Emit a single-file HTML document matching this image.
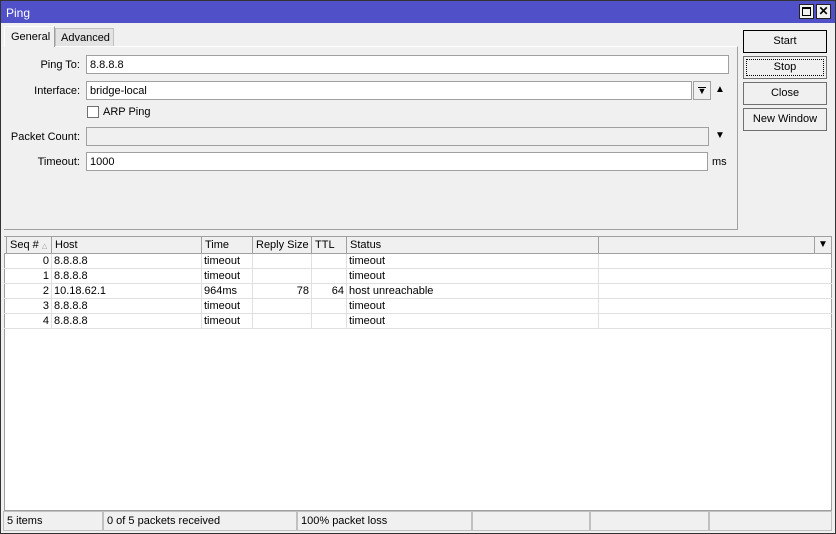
<!DOCTYPE html>
<html><head><style>
*{margin:0;padding:0;box-sizing:border-box}
body{width:836px;height:534px;background:#f0f0f0;font-family:"Liberation Sans",sans-serif;font-size:11px;color:#000;position:relative;overflow:hidden}
.a{position:absolute;white-space:nowrap}
.win{left:0;top:0;width:836px;height:534px;border:1px solid #333}
.title{left:1px;top:1px;width:834px;height:22px;background:#5050c8;color:#fff;font-size:12px;padding:5px 0 0 5px}
.tb{width:15px;height:15px;background:#f0f0f0;border:1px solid #222;top:4px}
.inp{background:#fff;border:1px solid #a0a0a0;height:19px;padding:2px 3px;line-height:14px}
.lbl{text-align:right;width:80px;left:0}
.btn{left:743px;width:84px;height:23px;border:1px solid #707070;background:#f0f0f0;text-align:center;line-height:21px}
.hd{top:236px;height:18px;border-right:1px solid #a0a0a0;border-top:1px solid #a0a0a0;border-bottom:1px solid #a0a0a0;padding:2px 3px;background:#f0f0f0;overflow:hidden}
.row{left:4px;width:828px;height:15px;border-bottom:1px solid #e0e0e0}
.c{position:absolute;top:0;height:15px;line-height:14px;border-right:1px solid #e0e0e0;padding:0 2px;white-space:nowrap;overflow:hidden}
.sb{top:511px;height:20px;border:1px solid #c0c0c0;padding:3px 3px;white-space:nowrap}
</style></head><body>
<div class="a win"></div>
<div class="a title">Ping</div>
<div class="a tb" style="left:799px"><div class="a" style="left:2px;top:2px;width:9px;height:9px;border:1px solid #000;border-top-width:2px"></div></div>
<div class="a tb" style="left:816px;font-weight:bold;font-size:12px;line-height:13px;text-align:center">✕</div>

<div class="a" style="left:4px;top:46px;width:734px;height:184px;border:1px solid #a0a0a0;border-left:none;border-top-color:#fff"></div>
<div class="a" style="left:4px;top:26px;width:51px;height:21px;background:#f0f0f0;border:1px solid #fff;border-right-color:#a0a0a0;border-bottom:none;padding:4px 0 0 6px">General</div>
<div class="a" style="left:55px;top:28px;width:59px;height:18px;background:#e3e3e3;border:1px solid #c0c0c0;border-bottom:none;padding:3px 0 0 5px">Advanced</div>

<div class="a lbl" style="top:59px">Ping To:</div>
<div class="a inp" style="left:86px;top:55px;width:643px">8.8.8.8</div>
<div class="a lbl" style="top:85px">Interface:</div>
<div class="a inp" style="left:86px;top:81px;width:606px">bridge-local</div>
<div class="a" style="left:693px;top:81px;width:18px;height:19px;border:1px solid #a0a0a0;text-align:center;font-size:9px;line-height:19px">▼</div>
<div class="a" style="left:698px;top:87px;width:8px;height:1px;background:#000"></div>
<div class="a" style="left:715px;top:84px;font-size:10px">▲</div>
<div class="a" style="left:87px;top:106px;width:12px;height:12px;background:#fff;border:1px solid #707070"></div>
<div class="a" style="left:103px;top:106px">ARP Ping</div>
<div class="a lbl" style="top:131px">Packet Count:</div>
<div class="a inp" style="left:86px;top:127px;width:623px;background:#f0f0f0"></div>
<div class="a" style="left:715px;top:130px;font-size:10px">▼</div>
<div class="a lbl" style="top:156px">Timeout:</div>
<div class="a inp" style="left:86px;top:152px;width:622px">1000</div>
<div class="a" style="left:712px;top:156px;font-size:11px">ms</div>

<div class="a btn" style="top:30px;border-color:#000">Start</div>
<div class="a btn" style="top:56px"><div style="position:absolute;left:2px;top:2px;right:2px;bottom:2px;border:1px dotted #000"></div>Stop</div>
<div class="a btn" style="top:82px">Close</div>
<div class="a btn" style="top:108px">New Window</div>

<div class="a" style="left:4px;top:236px;width:828px;height:275px;background:#fff;border:1px solid #a0a0a0"></div>
<div class="a hd" style="left:4px;width:3px;padding:0"></div>
<div class="a hd" style="left:7px;width:45px">Seq # <span style="font-size:7px;color:#999">△</span></div>
<div class="a hd" style="left:52px;width:150px">Host</div>
<div class="a hd" style="left:202px;width:51px">Time</div>
<div class="a hd" style="left:253px;width:59px">Reply Size</div>
<div class="a hd" style="left:312px;width:35px">TTL</div>
<div class="a hd" style="left:347px;width:252px">Status</div>
<div class="a hd" style="left:599px;width:216px"></div>
<div class="a hd" style="left:815px;width:17px;font-size:10px;padding:2px 3px">▼</div>

<div class="a" style="left:4px;top:254px">
<div class="row a" style="left:0;top:0"><div class="c" style="left:0;width:48px;text-align:right">0</div><div class="c" style="left:48px;width:150px">8.8.8.8</div><div class="c" style="left:198px;width:51px">timeout</div><div class="c" style="left:249px;width:59px"></div><div class="c" style="left:308px;width:35px"></div><div class="c" style="left:343px;width:252px">timeout</div></div>
<div class="row a" style="left:0;top:15px"><div class="c" style="left:0;width:48px;text-align:right">1</div><div class="c" style="left:48px;width:150px">8.8.8.8</div><div class="c" style="left:198px;width:51px">timeout</div><div class="c" style="left:249px;width:59px"></div><div class="c" style="left:308px;width:35px"></div><div class="c" style="left:343px;width:252px">timeout</div></div>
<div class="row a" style="left:0;top:30px"><div class="c" style="left:0;width:48px;text-align:right">2</div><div class="c" style="left:48px;width:150px">10.18.62.1</div><div class="c" style="left:198px;width:51px">964ms</div><div class="c" style="left:249px;width:59px;text-align:right">78</div><div class="c" style="left:308px;width:35px;text-align:right">64</div><div class="c" style="left:343px;width:252px">host unreachable</div></div>
<div class="row a" style="left:0;top:45px"><div class="c" style="left:0;width:48px;text-align:right">3</div><div class="c" style="left:48px;width:150px">8.8.8.8</div><div class="c" style="left:198px;width:51px">timeout</div><div class="c" style="left:249px;width:59px"></div><div class="c" style="left:308px;width:35px"></div><div class="c" style="left:343px;width:252px">timeout</div></div>
<div class="row a" style="left:0;top:60px"><div class="c" style="left:0;width:48px;text-align:right">4</div><div class="c" style="left:48px;width:150px">8.8.8.8</div><div class="c" style="left:198px;width:51px">timeout</div><div class="c" style="left:249px;width:59px"></div><div class="c" style="left:308px;width:35px"></div><div class="c" style="left:343px;width:252px">timeout</div></div>
</div>

<div class="a sb" style="left:3px;width:100px">5 items</div>
<div class="a sb" style="left:103px;width:194px">0 of 5 packets received</div>
<div class="a sb" style="left:297px;width:175px">100% packet loss</div>
<div class="a sb" style="left:472px;width:118px"></div>
<div class="a sb" style="left:590px;width:119px"></div>
<div class="a sb" style="left:709px;width:123px"></div>
</body></html>
